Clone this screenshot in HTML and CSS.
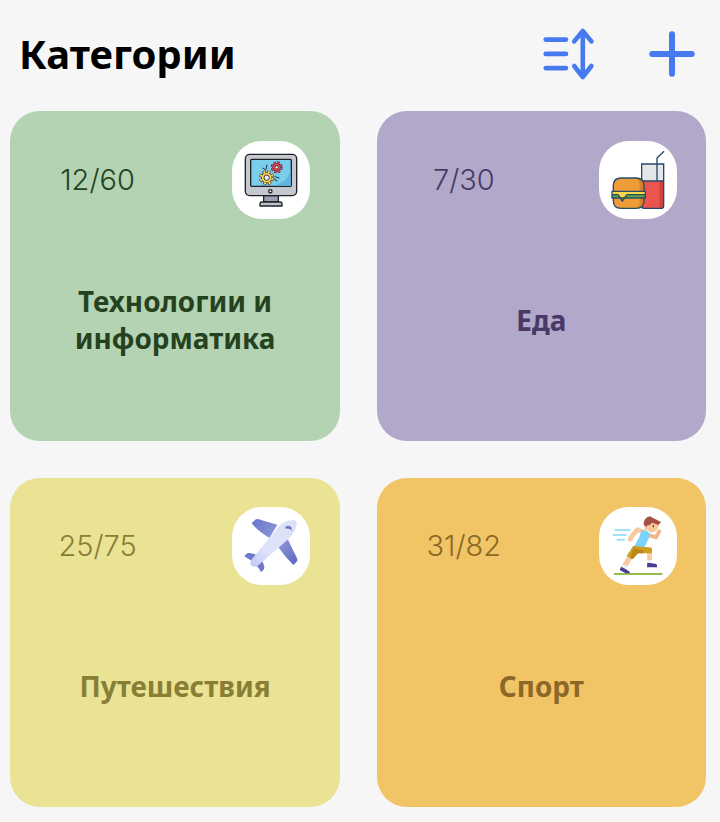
FILE: index.html
```html
<!DOCTYPE html>
<html lang="ru">
<head>
<meta charset="utf-8">
<title>Категории</title>
<link rel="stylesheet" href="styles.css">
</head>
<body>
<header class="header">
  <h1 class="title">Категории</h1>
  <div class="actions">
    <svg class="sort" viewBox="0 0 54 54" fill="none" stroke="#4779ef" stroke-width="4.6" stroke-linecap="round" stroke-linejoin="round">
      <path d="M3.7 12.6H24M3.7 26.9H24M3.7 41.1H24M40.8 4V50M32.2 14.4L40.8 4L49.4 14.4M32.2 39L40.8 50L49.4 39"/>
    </svg>
    <svg class="plus" viewBox="0 0 48 48" fill="none" stroke="#4779ef" stroke-width="6" stroke-linecap="round">
      <path d="M24 4.2V43.8M4.2 24H43.8"/>
    </svg>
  </div>
</header>
<main class="grid">
  <section class="card green">
    <div class="top">
      <span class="count">12/60</span>
      <svg class="tile" viewBox="22 16 234 234">
        <g stroke="#202228" stroke-width="4" stroke-linejoin="round" stroke-linecap="round">
          <path d="M117 180H161V199H117Z" fill="#9aa3af"/>
          <path d="M106 211V205Q106 199 112 199H166Q172 199 172 205V211Z" fill="#bdc2ca"/>
          <rect x="62" y="56" width="154" height="124" rx="13" fill="#c5c9cf"/>
          <rect x="78" y="71" width="122" height="81" rx="3" fill="#7bcdec"/>
          <circle cx="137" cy="167" r="5" fill="#fff"/>
        </g>
        <path d="M198 100Q190 142 145 150H198Z" fill="#5eb5df"/>
        <path d="M113 97L123 102M127 87L124 101M150 123L164 127M148 130L158 136" fill="none" stroke="#203542" stroke-width="3"/>
        <circle cx="126" cy="126" r="18" fill="none" stroke="#3e3427" stroke-width="9" stroke-dasharray="9 5.14"/>
        <circle cx="126" cy="126" r="16" fill="#f8cf62" stroke="#3e3427" stroke-width="3"/>
        <circle cx="126" cy="126" r="18" fill="none" stroke="#f8cf62" stroke-width="6" stroke-dasharray="6 8.14" stroke-dashoffset="-1.5"/>
        <circle cx="126" cy="126" r="8" fill="#dff6fd" stroke="#3e3427" stroke-width="3"/>
        <circle cx="156" cy="95" r="14" fill="none" stroke="#542531" stroke-width="8" stroke-dasharray="7 4"/>
        <circle cx="156" cy="95" r="12" fill="#e4526a" stroke="#542531" stroke-width="3"/>
        <circle cx="156" cy="95" r="14" fill="none" stroke="#e4526a" stroke-width="5" stroke-dasharray="4.6 6.4" stroke-dashoffset="-1.2"/>
        <circle cx="156" cy="95" r="5" fill="#fff" stroke="#542531" stroke-width="3"/>
      </svg>
    </div>
    <h2 class="name">Технологии и информатика</h2>
  </section>
  <section class="card purple">
    <div class="top">
      <span class="count">7/30</span>
      <svg class="tile" viewBox="27 16 234 234">
        <path d="M155 85H221V137H155Z" fill="#e3e7e8"/>
        <path d="M155 136H221V210Q221 218 213 218H163Q155 218 155 210Z" fill="#eb554f"/>
        <path d="M208 137H220V216H205Q208 213 208 207Z" fill="#ce4443"/>
        <path d="M221 85V210Q221 218 213 218H163Q155 218 155 210V85ZM155 136H221M201 135V67L222 47" fill="none" stroke="#26476b" stroke-width="4"/>
        <path d="M70 167V150Q70 127 94 127H138Q162 127 162 150V167Z" fill="#ee9c38"/>
        <path d="M139 128Q161 129 161 151V166H149V148Q149 134 139 128Z" fill="#d68129"/>
        <path d="M70 188H162V195Q162 218 139 218H93Q70 218 70 195Z" fill="#ee9c38"/>
        <path d="M149 188H162V197Q161 216 140 217Q149 210 149 198Z" fill="#d68129"/>
        <path d="M66 177H166V187H66Z" fill="#67a33b"/>
        <path d="M66 167H166V177H109L97 196L84 177H66Z" fill="#f6d747"/>
        <path d="M70 167V150Q70 127 94 127H138Q162 127 162 150V167M66 167H166V187H66ZM70 188V195Q70 218 93 218H139Q162 218 162 195V188M66 177H84L97 196L111 177H166" fill="none" stroke="#264c67" stroke-width="4" stroke-linejoin="round"/>
      </svg>
    </div>
    <h2 class="name">Еда</h2>
  </section>
  <section class="card yellow">
    <div class="top">
      <span class="count">25/75</span>
      <svg class="tile" viewBox="22 21 234 234">
        <defs>
          <linearGradient id="wing" x1="0" y1="0" x2="1" y2="1"><stop offset="0" stop-color="#6875c8"/><stop offset=".5" stop-color="#929cdb"/><stop offset="1" stop-color="#5d67bf"/></linearGradient>
          <linearGradient id="hull" x1="0" y1="1" x2="1" y2="0"><stop offset="0" stop-color="#c0c7ef"/><stop offset=".35" stop-color="#dfe3fa"/><stop offset="1" stop-color="#dce1f8"/></linearGradient>
        </defs>
        <path d="M81 70L91 60Q95 56 102 58L158 74L134 114Q98 92 81 70ZM189 117L217 175Q220 180 216 185L206 195Q182 172 161 142Z" fill="url(#wing)"/>
        <path d="M59 169L65 162Q69 158 75 159L96 164L83 184ZM96 198L112 177L119 201Q120 205 116 210L109 217Q104 205 96 198Z" fill="#6d79c9"/>
        <path d="M82 177L163 79Q181 60 207 60Q217 61 216 73Q214 93 192 116L103 194Q91 204 82 198Q72 190 82 177Z" fill="url(#hull)"/>
        <path d="M182 80Q195 73 201 83V92Q195 84 183 86Z" fill="#6876c6"/>
      </svg>
    </div>
    <h2 class="name">Путешествия</h2>
  </section>
  <section class="card orange">
    <div class="top">
      <span class="count">31/82</span>
      <svg class="tile" viewBox="27 21 234 234">
        <path d="M76 90H119M70 105H108M83 119H103" stroke="#a3e1f5" stroke-width="6" stroke-linecap="round"/>
        <path d="M72 222H217" stroke="#93bd4c" stroke-width="6"/>
        <g fill="none" stroke-linecap="round" stroke-linejoin="round">
          <path d="M167 98L142 89L126 108L120 118" stroke="#f8c99f" stroke-width="14"/>
          <path d="M174 105L198 112L208 94" stroke="#f2b78f" stroke-width="12"/>
          <path d="M178 157L179 180" stroke="#f8c99f" stroke-width="14"/>
          <path d="M120 171L105 196" stroke="#f8c99f" stroke-width="16"/>
        </g>
        <path d="M172 181H186V190H172ZM97 192L112 198L108 206L94 200Z" fill="#eaf2fb"/>
        <path d="M155 91Q168 89 179 99L176 116L162 144L132 140L148 111Z" fill="#78d4fa"/>
        <path d="M130 137L163 141Q186 140 186 147V160H144L128 178L110 168Z" fill="#cf9e24"/>
        <path d="M130 145L161 151L160 160H144L128 178L121 174Z" fill="#b98818"/>
        <path d="M168 62L177 57L207 69Q207 91 192 96Q181 100 173 91L163 88Z" fill="#f8c99f"/>
        <path d="M170 81L161 75Q161 52 180 49L188 53L213 66L205 75L186 68L179 76L173 74Z" fill="#a84f43"/>
        <path d="M190 75V82" stroke="#6c3c37" stroke-width="4"/>
        <path d="M172 188L185 190L199 192Q202 195 201 202H171ZM93 200L107 207L119 215V220H107L89 210Z" fill="#4b3c92"/>
      </svg>
    </div>
    <h2 class="name">Спорт</h2>
  </section>
</main>
</body>
</html>
```
FILE: styles.css
```css
* { box-sizing: border-box; }
body {
  margin: 0;
  background: #f6f6f6;
  font-family: "Noto Sans", sans-serif;
}
.header {
  display: flex;
  justify-content: space-between;
  align-items: center;
  height: 111.3px;
  padding: 0 24px 3px 19px;
}
.title {
  margin: 0;
  font-size: 40px;
  line-height: 54px;
  font-weight: 700;
  color: #000;
}
.actions { display: flex; align-items: center; gap: 52px; }
.sort { width: 54px; height: 54px; }
.plus { width: 48px; height: 48px; }
.grid {
  display: grid;
  grid-template-columns: 329.3px 329.3px;
  gap: 37px;
  padding-left: 10.4px;
}
.card {
  height: 329.3px;
  border-radius: 30px;
  padding: 29.3px;
  display: flex;
  flex-direction: column;
}
.top { display: flex; align-items: center; }
.count {
  flex: 1;
  padding-right: 77px;
  display: flex;
  justify-content: center;
  font-family: Inter, sans-serif;
  font-size: 29px;
  font-weight: 300;
}
.tile {
  flex: none;
  width: 78px;
  height: 78px;
  background: #fff;
  border-radius: 30px;
}
.name {
  flex: 1;
  margin: 0;
  padding-top: 11px;
  display: flex;
  align-items: center;
  justify-content: center;
  text-align: center;
  font-size: 27.9px;
  line-height: 37px;
  font-weight: 700;
}
.green { background: #b4d3b3; color: #25421f; }
.purple { background: #b2a8ca; color: #493967; }
.yellow { background: #eae394; color: #887e36; }
.orange { background: #f1c466; color: #8b6827; }
```
